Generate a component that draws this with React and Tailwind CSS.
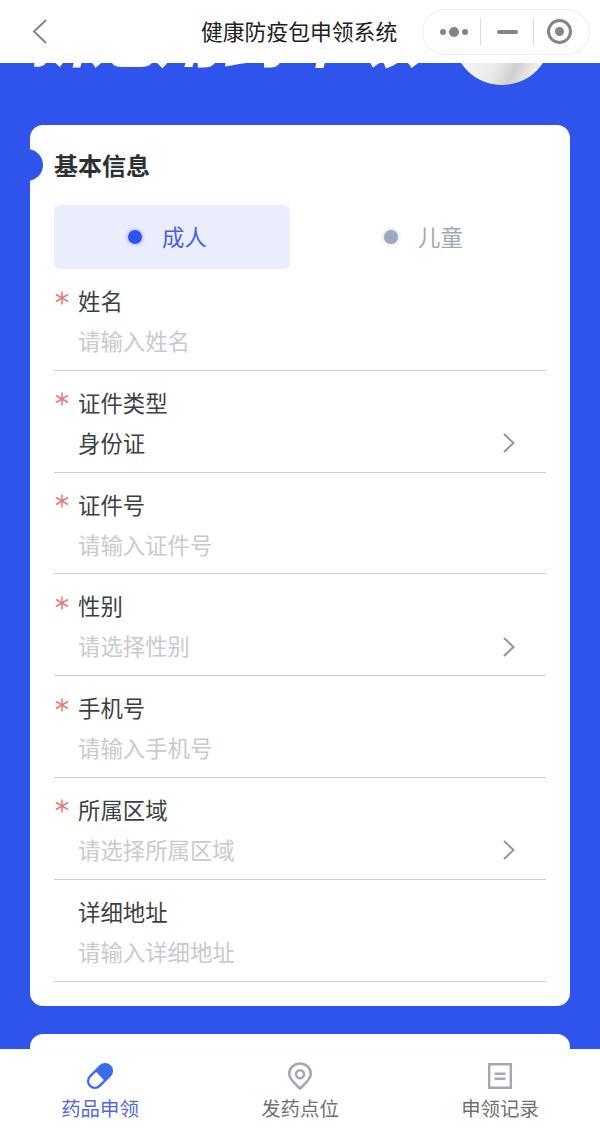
import React, { useState } from "react";

const fields = [
  { label: "姓名", text: "请输入姓名", required: true },
  { label: "证件类型", text: "身份证", required: true, filled: true, select: true },
  { label: "证件号", text: "请输入证件号", required: true },
  { label: "性别", text: "请选择性别", required: true, select: true },
  { label: "手机号", text: "请输入手机号", required: true },
  { label: "所属区域", text: "请选择所属区域", required: true, select: true },
  { label: "详细地址", text: "请输入详细地址" },
];

const Header = () => (
  <header className="relative z-10 h-[63px] shrink-0 bg-white flex items-center justify-between pl-8 pr-[10px]">
    <svg className="w-4 h-[26px] -mt-[2px]" viewBox="0 0 16 26" fill="none" stroke="#858585" strokeWidth="2">
      <path d="M14 2L2 13.5L14 25" />
    </svg>
    <h1 className="-mt-[2px] ml-[153px] flex-1 whitespace-nowrap text-[21.8px] leading-8 text-[#202020]">健康防疫包申领系统</h1>
    <div className="w-[168px] h-[46px] rounded-full border border-[#ececec] flex items-center">
      <div className="w-[57px] pl-1 flex items-center justify-center gap-[3px]">
        <span className="w-[6px] h-[6px] rounded-full bg-[#858585]" />
        <span className="w-[10px] h-[10px] rounded-full bg-[#858585]" />
        <span className="w-[6px] h-[6px] rounded-full bg-[#858585]" />
      </div>
      <span className="w-px h-[27px] bg-[#dcdcdc]" />
      <div className="w-[52px] flex justify-center">
        <span className="w-[21px] h-[4px] rounded-full bg-[#858585]" />
      </div>
      <span className="w-px h-[27px] bg-[#dcdcdc]" />
      <div className="flex-1 flex justify-center pr-1">
        <span className="w-[25px] h-[25px] rounded-full border-[3px] border-[#858585] flex items-center justify-center">
          <span className="w-[9px] h-[9px] rounded-full bg-[#858585]" />
        </span>
      </div>
    </div>
  </header>
);

// Bottom edge of the banner that is scrolled under the header
const Banner = () => (
  <div className="relative h-[62px] shrink-0 overflow-hidden">
    <p className="absolute left-[24px] -top-[63px] whitespace-nowrap text-[66px] leading-[66px] font-bold italic text-white">
      新冠用药申领
    </p>
    <div className="absolute left-[453px] -top-[76px] w-[98px] h-[98px] rounded-full bg-[linear-gradient(115deg,#f4f4f2_35%,#ebebe9_55%,#cfcfcd_70%,#f1f1ef_85%)]" />
  </div>
);

const Field = ({ field }) => (
  <div className="h-[101.8px] border-b border-[#cfcfcf] pt-[14px]">
    <div className="flex h-[34px] items-center">
      <span className="w-6 pl-px">
        {field.required && (
          <svg className="w-[14px] h-[14px] -mt-[5px]" viewBox="0 0 14 14" stroke="#ea7770" strokeWidth="1.5">
            <path d="M7 .5v13M1 3.5l12 7M13 3.5L1 10.5" />
          </svg>
        )}
      </span>
      <label className="text-[22.4px] leading-[34px] text-[#3c3f42]">{field.label}</label>
    </div>
    <div className="mt-[6px] flex h-[34px] items-center justify-between pl-6 pr-[31px]">
      <span className={field.filled ? "text-[22.4px] leading-[34px] text-[#3c3f42]" : "text-[22.4px] leading-[34px] text-[#c8cacd]"}>
        {field.text}
      </span>
      {field.select && (
        <svg className="mt-[3px] w-3 h-5" viewBox="0 0 12 20" fill="none" stroke="#969696" strokeWidth="2">
          <path d="M1 1l9.5 9L1 19" />
        </svg>
      )}
    </div>
  </div>
);

const PillIcon = () => (
  <svg className="w-7 h-7 overflow-visible" viewBox="0 0 28 28">
    <g transform="rotate(45 14 14)">
      <rect x="6" y="-1.2" width="16" height="30.4" rx="8" fill="#3b6de8" />
      <path d="M8.5 14h11v7.4a5.5 5.5 0 0 1-11 0z" fill="#fff" />
    </g>
  </svg>
);

const PinIcon = () => (
  <svg className="w-7 h-7" viewBox="0 0 28 28" fill="none" stroke="#a3a7b8" strokeWidth="2.6">
    <path d="M14 26.5C9.5 22 3.2 17.5 3.2 11.7a10.8 10.2 0 0 1 21.6 0C24.8 17.5 18.5 22 14 26.5z" />
    <circle cx="14" cy="12.3" r="4" />
  </svg>
);

const RecordIcon = () => (
  <svg className="w-7 h-7" viewBox="0 0 28 28" fill="none" stroke="#a3a7b8" strokeWidth="2.4">
    <path d="M3.2 2.2h21.6v23.6H3.2zM8.5 11.7h11M8.5 16.7h11" />
  </svg>
);

const tabs = [
  { name: "药品申领", icon: <PillIcon /> },
  { name: "发药点位", icon: <PinIcon /> },
  { name: "申领记录", icon: <RecordIcon /> },
];

const App = () => {
  const [type, setType] = useState("adult");
  const [tab, setTab] = useState(0);

  return (
    <div className="flex h-[1129px] w-[600px] flex-col overflow-hidden bg-[#2f54eb] font-['Noto_Sans_CJK_SC',sans-serif] font-normal">
      <Header />
      <Banner />

      <main className="flex-1 min-h-0 overflow-hidden px-[30px]">
        <section className="relative h-[881px] rounded-[13px] bg-white px-6 pt-[22px] overflow-hidden">
          <span className="absolute -left-[19px] top-[24px] w-8 h-8 rounded-full bg-[#2f54eb]" />
          <h2 className="text-[24px] leading-9 font-bold text-[#2b3033]">基本信息</h2>

          <div className="mt-[22px] flex h-16 gap-5">
            <button
              onClick={() => setType("adult")}
              className={type === "adult" ? "w-[236px] rounded-md bg-[#e9edfc] text-[#4a62d4] flex items-center pl-[74px]" : "w-[236px] rounded-md text-[#a3a6b6] flex items-center pl-[74px]"}
            >
              <span className={type === "adult" ? "w-[14px] h-[14px] rounded-full bg-[#2f54eb] shadow-[0_0_3px_2px_#c3cefb]" : "w-[14px] h-[14px] rounded-full bg-[#a0a6bd] shadow-[0_0_3px_2px_#e6eafa]"} />
              <span className="ml-5 text-[22.4px]">成人</span>
            </button>
            <button
              onClick={() => setType("child")}
              className={type === "child" ? "w-[236px] rounded-md bg-[#e9edfc] text-[#4a62d4] flex items-center pl-[74px]" : "w-[236px] rounded-md text-[#a3a6b6] flex items-center pl-[74px]"}
            >
              <span className={type === "child" ? "w-[14px] h-[14px] rounded-full bg-[#2f54eb] shadow-[0_0_3px_2px_#c3cefb]" : "w-[14px] h-[14px] rounded-full bg-[#a0a6bd] shadow-[0_0_3px_2px_#e6eafa]"} />
              <span className="ml-5 text-[22.4px]">儿童</span>
            </button>
          </div>

          {fields.map((field) => (
            <Field key={field.label} field={field} />
          ))}
        </section>

        <section className="mt-7 h-40 rounded-[13px] bg-white" />
      </main>

      <nav className="h-20 shrink-0 bg-white border-t border-[#fafafa] flex">
        {tabs.map((item, i) => (
          <button key={item.name} onClick={() => setTab(i)} className="flex-1 flex flex-col items-center pt-3">
            {item.icon}
            <span className={tab === i ? "mt-1 text-[19.4px] leading-7 text-[#5468d8]" : "mt-1 text-[19.4px] leading-7 text-[#707070]"}>
              {item.name}
            </span>
          </button>
        ))}
      </nav>
    </div>
  );
};

export default App;
